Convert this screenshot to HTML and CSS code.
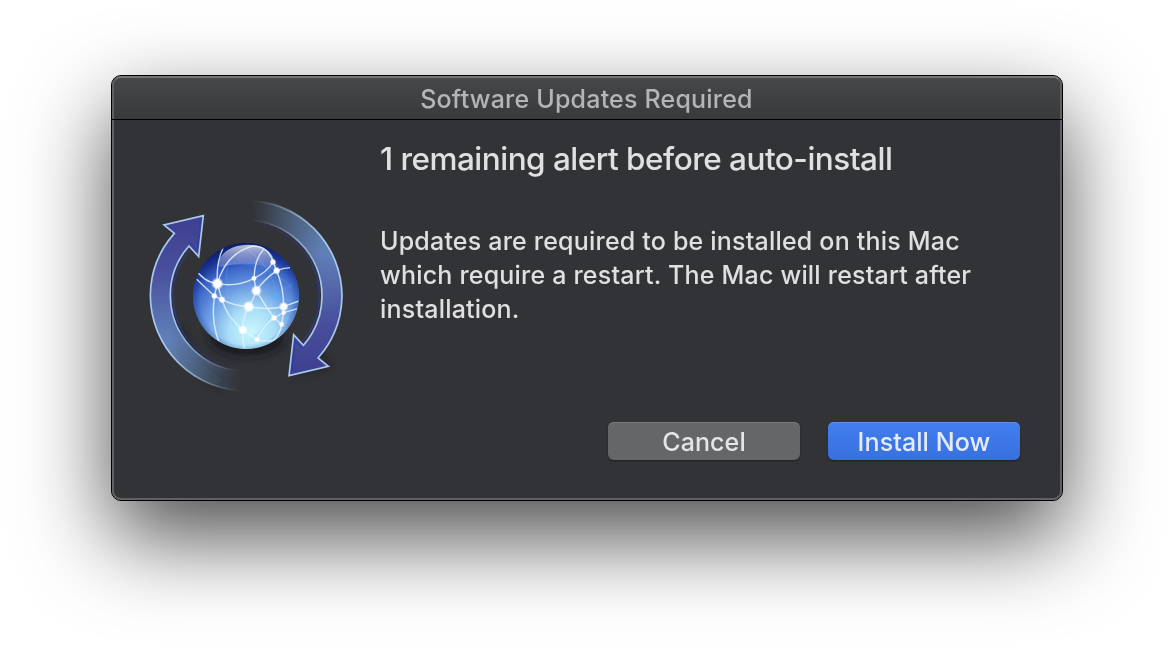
FILE: index.html
```html
<!DOCTYPE html>
<html lang="en">
<head>
<meta charset="utf-8">
<title>Software Updates Required</title>
<link rel="stylesheet" href="styles.css">
</head>
<body>
<main class="window">
  <div class="frame">
    <header class="titlebar"><span class="title">Software Updates Required</span></header>
    <section class="content">
      <svg class="icon" viewBox="0 0 630 630" aria-hidden="true">
        <defs>
          <linearGradient id="arrowFill" gradientUnits="userSpaceOnUse" x1="150" y1="80" x2="170" y2="600">
            <stop offset="0" stop-color="#3d3f90"/><stop offset=".3" stop-color="#494f9c"/>
            <stop offset=".7" stop-color="#6080b9"/><stop offset="1" stop-color="#55718f"/>
          </linearGradient>
          <linearGradient id="fade" gradientUnits="userSpaceOnUse" x1="90" y1="0" x2="305" y2="0">
            <stop offset="0" stop-color="#fff"/><stop offset=".35" stop-color="#bbb"/><stop offset=".65" stop-color="#666"/><stop offset=".85" stop-color="#202020"/><stop offset="1" stop-color="#000"/>
          </linearGradient>
          <linearGradient id="headOn" gradientUnits="userSpaceOnUse" x1="0" y1="340" x2="0" y2="440">
            <stop offset="0" stop-color="#fff"/><stop offset="1" stop-color="#fff" stop-opacity="0"/>
          </linearGradient>
          <mask id="tail" maskUnits="userSpaceOnUse" x="0" y="0" width="630" height="630">
            <rect width="630" height="630" fill="url(#fade)"/>
            <rect width="630" height="630" fill="url(#headOn)"/>
          </mask>
          <radialGradient id="sphere" gradientUnits="userSpaceOnUse" cx="335" cy="425" r="270">
            <stop offset="0" stop-color="#c9f7ff"/><stop offset=".25" stop-color="#abdff7"/>
            <stop offset=".5" stop-color="#6c9de2"/><stop offset=".73" stop-color="#3b64c8"/>
            <stop offset=".88" stop-color="#1a2f90"/><stop offset="1" stop-color="#030b50"/>
          </radialGradient>
          <radialGradient id="rim" gradientUnits="userSpaceOnUse" cx="318" cy="328" r="160">
            <stop offset=".85" stop-color="#16388f" stop-opacity="0"/><stop offset="1" stop-color="#12338c" stop-opacity=".4"/>
          </radialGradient>
          <linearGradient id="gloss" x1="0" y1="0" x2="0" y2="1">
            <stop offset="0" stop-color="#fff" stop-opacity=".72"/><stop offset="1" stop-color="#dbe2ff" stop-opacity=".13"/>
          </linearGradient>
          <radialGradient id="node"><stop offset="0" stop-color="#fff"/><stop offset=".55" stop-color="#fff"/><stop offset="1" stop-color="#fff" stop-opacity="0"/></radialGradient>
          <filter id="soft" x="-30%" y="-30%" width="160%" height="160%"><feGaussianBlur stdDeviation="14"/></filter>
          <clipPath id="disc"><circle cx="318" cy="318" r="158"/></clipPath>
          <g id="arrow" mask="url(#tail)">
            <path d="M190 77L72 105L103 130A286 286 0 0 0 31 315A287 287 0 0 0 318 602V543A227 227 0 0 1 91 315A224 224 0 0 1 147 168L176 200Z" fill="url(#arrowFill)"/>
            <path d="M181 90L172 183L148 158M149 180A219 219 0 0 0 99 315A219 219 0 0 0 318 534" fill="none" stroke="#2c3ba5" stroke-width="5" opacity=".6"/>
            <path d="M318 602A287 287 0 0 1 31 315A286 286 0 0 1 103 130L72 105L190 77L176 200L147 168A224 224 0 0 0 91 315A227 227 0 0 0 318 543" fill="none" stroke="#a9c9ed" stroke-width="5"/>
          </g>
        </defs>
        <g filter="url(#soft)" fill="#17181a">
          <ellipse cx="320" cy="442" rx="112" ry="54" opacity=".95"/>
          <path d="M100 420Q140 540 240 590L255 570Q160 520 130 420Z" opacity=".5"/>
          <path d="M445 555L570 530L545 490Z" opacity=".4"/>
        </g>
        <use href="#arrow"/>
        <use href="#arrow" transform="rotate(180 318.5 317)"/>
        <circle cx="318" cy="318" r="159" fill="url(#sphere)"/>
        <g clip-path="url(#disc)">
          <circle cx="318" cy="318" r="159" fill="url(#rim)"/>
          <g fill="none" stroke="#65b8f5" stroke-width="3" opacity=".3">
            <path d="M264 210Q250 310 282 405M245 226Q370 205 455 292M325 180Q405 240 408 318Q405 390 335 448M408 318L460 280"/>
          </g>
          <circle cx="408" cy="318" r="12" fill="#46b5ff" opacity=".4"/>
          <path d="M236 216Q252 166 325 164Q391 166 406 217Q420 240 390 239Q360 220 310 221Q266 221 248 232Q231 234 236 216Z" fill="url(#gloss)"/>
          <g fill="none" stroke="#e4f4ff" stroke-width="4.2" opacity=".85">
            <path d="M249 174Q228 220 232 281Q205 380 238 458"/>
            <path d="M232 281Q258 190 338 168Q385 168 399 216L410 242Q442 320 425 403Q420 435 399 453"/>
            <path d="M160 230Q191 277 232 281Q291 292 342 265Q382 246 399 216"/>
            <path d="M371 178Q343 208 342 265L349 302Q374 345 402 384L425 403"/>
            <path d="M170 268L223 318L246 329Q285 349 326 350Q383 361 431 350L477 333"/>
            <path d="M232 281L246 329M450 233Q428 235 410 242Q371 270 349 302Q341 328 326 350Q307 385 309 420Q307 445 313 475"/>
            <path d="M246 329Q261 382 309 420L351 449Q378 457 416 450"/>
            <path d="M351 449Q367 407 402 384L431 368L473 356"/>
          </g>
          <g fill="url(#node)">
            <circle cx="232" cy="281" r="19"/><circle cx="349" cy="302" r="17"/><circle cx="326" cy="350" r="18"/>
            <circle cx="309" cy="420" r="15"/><circle cx="431" cy="350" r="15"/><circle cx="410" cy="242" r="12"/>
            <circle cx="399" cy="216" r="10"/><circle cx="342" cy="265" r="9"/><circle cx="223" cy="318" r="10"/>
            <circle cx="246" cy="329" r="11"/><circle cx="402" cy="384" r="10"/><circle cx="425" cy="403" r="9"/>
            <circle cx="431" cy="368" r="8"/><circle cx="351" cy="449" r="9"/>
          </g>
        </g>
      </svg>
      <div class="message">
        <h1 class="heading">1 remaining alert before auto-install</h1>
        <p class="body">Updates are required to be installed on this Mac<br>which require a restart. The Mac will restart after<br>installation.</p>
      </div>
    </section>
    <footer class="actions">
      <button class="button">Cancel</button>
      <button class="button primary">Install Now</button>
    </footer>
  </div>
</main>
</body>
</html>
```
FILE: styles.css
```css
* { box-sizing: border-box; }
body {
  margin: 0;
  width: 1174px;
  height: 648px;
  overflow: hidden;
  padding: 75px 111px 0;
  background: #fff;
  font-family: Inter, "Liberation Sans", sans-serif;
  font-weight: 450;
  color: #e0e0e1;
}
.window {
  width: 952px;
  height: 426px;
  border: 1px solid #000;
  border-radius: 10px;
  background: #606163;
  box-shadow: 0 36px 88px rgba(0, 0, 0, .7);
}
.frame {
  height: 424px;
  border: 2px solid #606163;
  border-top-color: #747576;
  border-radius: 9px;
  background: #323337;
  display: flex;
  flex-direction: column;
}
.titlebar {
  position: relative;
  flex: none;
  height: 42px;
  border-radius: 7px 7px 0 0;
  background: linear-gradient(#464748, #38393b);
  text-align: center;
  line-height: 42px;
}
/* The divider crosses the light frame on both sides. */
.titlebar::after {
  content: "";
  position: absolute;
  inset: auto -2px 0;
  height: 1px;
  background: #000;
}
.title { font-size: 25px; letter-spacing: .2px; margin-right: 1px; color: #b4b5b7; }
.content {
  display: flex;
  height: 288px;
  padding: 0 26px;
}
.icon { flex: none; width: 210px; height: 210px; margin-top: 70px; }
.message { padding-left: 30px; white-space: nowrap; }
.heading { margin: 19px 0 0; font-size: 31.5px; font-weight: 450; line-height: 40px; letter-spacing: -.51px; }
.body { margin: 45px 0 0; font-size: 25px; line-height: 34px; letter-spacing: .2px; }
.actions {
  display: flex;
  justify-content: flex-end;
  gap: 28px;
  padding: 14px 40px 0 0;
}
.button {
  width: 192px;
  height: 38px;
  padding: 1px 0 0;
  border: 0;
  border-radius: 6px;
  background: #656668;
  box-shadow: inset 0 1px #7b7c7e, 0 1px 2px rgba(0, 0, 0, .4);
  font: 450 25px/38px Inter, "Liberation Sans", sans-serif;
  letter-spacing: .1px;
  color: #e5e5e5;
}
.primary {
  background: linear-gradient(#427eee, #3870df);
  box-shadow: inset 0 1px #5b91f1, 0 1px 2px rgba(0, 0, 0, .4);
  color: #e4ecfc;
}
```
